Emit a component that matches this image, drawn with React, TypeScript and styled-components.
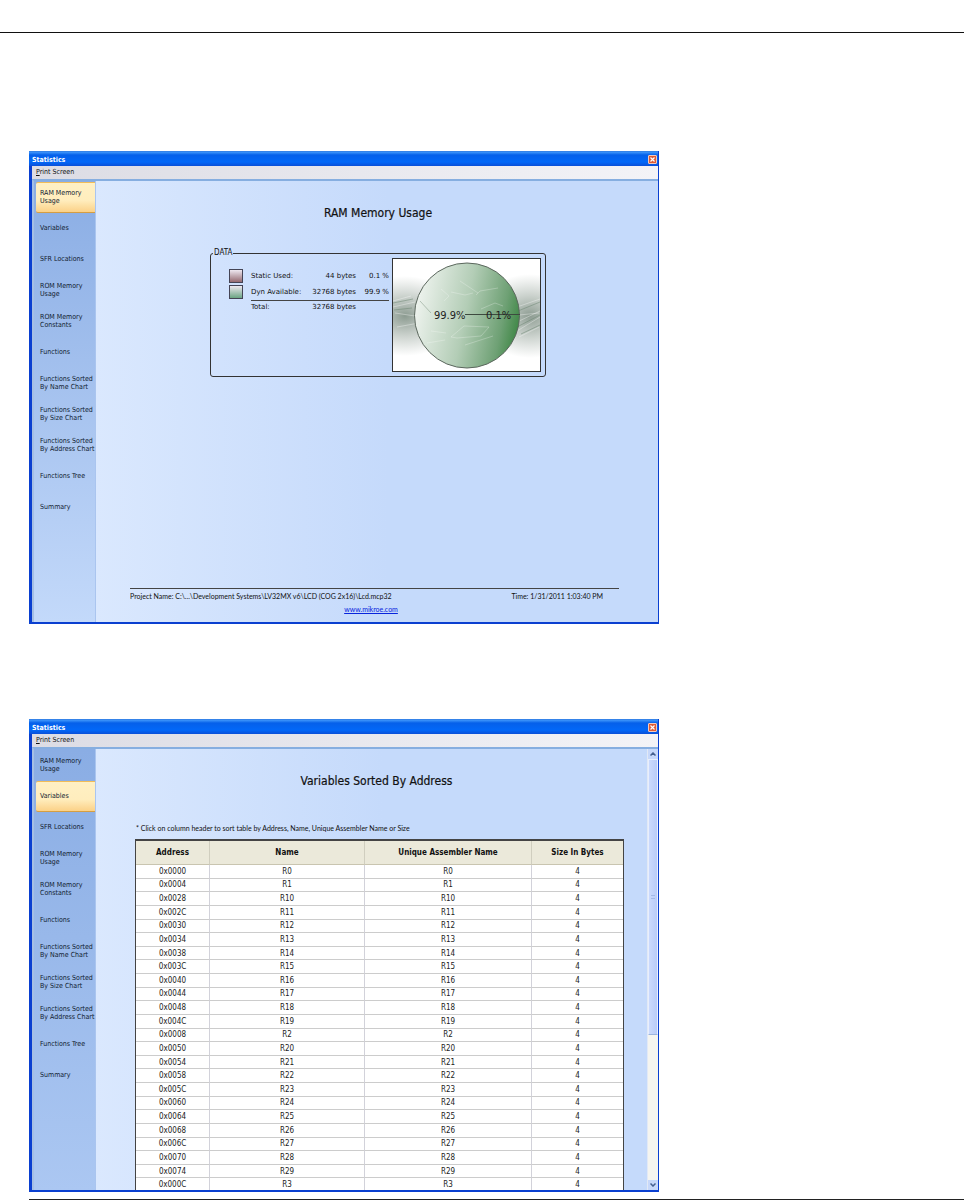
import React from "react";
import styled, { createGlobalStyle } from "styled-components";

const GlobalStyle = createGlobalStyle`
  *, *::before, *::after { box-sizing: border-box; }
  body {
    margin: 0;
    background: #fff;
    color: #111;
    font: 7px/8px "DejaVu Sans Condensed", "DejaVu Sans", sans-serif;
  }
  button { font: inherit; color: inherit; border: 0; padding: 0; background: none; }
  h1, h2, p { margin: 0; }
`;

const narrow = `"Lato", "Liberation Sans", sans-serif`;

const Page = styled.main`
  padding-right: 2px;
`;

const TopRule = styled.header`
  height: 33px;
  margin-bottom: 118px;
  border-bottom: 1px solid #111;
`;

const Figures = styled.div`
  display: flex;
  flex-direction: column;
  gap: 95px;
  margin-left: 29px;
  padding-bottom: 7px;
  border-bottom: 1px solid #222;
`;

const Window = styled.section`
  display: flex;
  flex-direction: column;
  width: 100%;
  max-width: 630px;
  border: solid #0a3fd0;
  border-width: 0 1px 2px 3px;
`;

const TitleBar = styled.header`
  display: flex;
  align-items: center;
  justify-content: space-between;
  height: 15px;
  margin-left: -3px;
  padding: 2px 1px 0 3px;
  background: linear-gradient(#2b6fd6 0, #3f97fb 1px, #0560ea 4px, #0268f8 11px, #0a4fd8 15px);
  color: #fff;
`;

const WindowName = styled.h1`
  font-size: 7px;
  line-height: 8px;
  font-weight: bold;
`;

const CloseButton = styled.button`
  display: grid;
  place-items: center;
  width: 9px;
  height: 9px;
  border: 1px solid #f4c8bc;
  border-radius: 1px;
  background: #dd5b35;
`;

const MenuBar = styled.div`
  display: flex;
  align-items: flex-start;
  height: 13px;
  padding: 2px 0 0 4px;
  background: linear-gradient(90deg, #dcdce4, #f3f3f7);
`;

const Body = styled.div`
  display: flex;
  height: 443px;
  border-top: 2px solid #86aee0;
  border-left: 2px solid #a5bfe4;
`;

const Sidebar = styled.nav<{ $end: string }>`
  flex: none;
  width: 62px;
  padding: 1px 0 0 2px;
  border-right: 1px solid #aac5ef;
  background: linear-gradient(#8aade4, ${(p) => p.$end});
`;

const NavList = styled.div`
  display: grid;
  grid-auto-rows: 1fr;
  height: 340px;
`;

const NavItem = styled.button<{ $active?: boolean }>`
  padding: 0 0 0 4px;
  text-align: left;
  white-space: pre-line;
  color: #111c30;
  ${(p) =>
    p.$active &&
    `
    border-radius: 2px 0 0 2px;
    border-top: 1px solid #f2bd58;
    border-bottom: 1px solid #d59e43;
    background: linear-gradient(#fff0c4, #ffedbd 60%, #fbd187);
  `}
`;

const Content = styled.div`
  flex: 1;
  min-width: 0;
  display: flex;
  flex-direction: column;
  overflow: hidden;
  background: linear-gradient(90deg, #dae8fe, #c5dafb 52%);
`;

const Heading = styled.h2<{ $shift?: boolean }>`
  padding: 24px 0 0;
  padding-left: ${(p) => (p.$shift ? "10px" : "2px")};
  text-align: center;
  font-size: 12px;
  line-height: 16px;
  font-weight: normal;
  -webkit-text-stroke: 0.2px #111;
`;

const DataGroup = styled.fieldset`
  display: flex;
  align-items: flex-start;
  justify-content: space-between;
  width: 336px;
  min-width: 0;
  margin: 28px 0 0 114px;
  padding: 1px 4px 4px 18px;
  border: 1px solid #333;
  border-radius: 3px;

  legend {
    margin-left: -16px;
    padding: 0 1px;
    font-size: 8px;
  }
`;

const Usage = styled.table`
  width: 160px;
  margin-top: 10px;
  border-collapse: collapse;
  table-layout: fixed;
  font-family: "DejaVu Sans", sans-serif;

  td, th { padding: 0; height: 16px; text-align: right; font-weight: normal; white-space: nowrap; }
  th { text-align: left; }
  td:first-child { text-align: left; }
  tfoot td, tfoot th { height: 14px; }
  tfoot th, tfoot th ~ td { border-top: 1px solid #444; }
`;

const Swatch = styled.span<{ $tone: string }>`
  display: block;
  width: 14px;
  height: 14px;
  border: 1px solid #445;
  background: linear-gradient(#eee8f0, ${(p) => p.$tone});
`;

const Chart = styled.svg`
  flex: none;
  width: 149px;
  height: 114px;
  background: #fff;
  border: 1px solid #333;
`;

const Footer = styled.footer`
  margin: auto 39px 9px 34px;
  border-top: 1px solid #444;
  font-family: ${narrow};
`;

const FooterRow = styled.div`
  display: flex;
  justify-content: space-between;
  padding: 3px 16px 5px 0;
`;

const SiteLink = styled.a`
  display: block;
  width: fit-content;
  margin: 0 auto;
  padding: 0 7px 0 0;
  color: #0824dd;
`;

const Note = styled.p`
  margin: 35px 0 7px 40px;
  font-family: ${narrow};
`;

const Variables = styled.table`
  flex: none;
  width: 489px;
  height: 352px;
  margin-left: 39px;
  border-collapse: separate;
  border-spacing: 0;
  table-layout: fixed;
  border: solid #444;
  border-width: 2px 1px 0;
  background: #fff;
  font-size: 8px;

  th { height: 24px; padding: 0; background: #ebe9da; border-bottom: 1px solid #c9c5b0; border-right: 1px solid #d0cebf; }
  td { padding: 1px 0 0; text-align: center; border-bottom: 1px solid #ccc; border-right: 1px solid #d2d2da; color: #222; }
  th:last-child, td:last-child { border-right: 0; }
  tbody tr:last-child td { border-bottom: 0; }
  th button { font-weight: bold; }
`;

const Scrollbar = styled.div`
  flex: none;
  display: flex;
  flex-direction: column;
  width: 11px;
  border-left: 1px solid #e2e9f6;
  background: #f5f5f0;
`;

const ScrollButton = styled.button`
  display: grid;
  place-items: center;
  height: 10px;
  background: #c7d8fa;
`;

const Thumb = styled.div`
  display: grid;
  place-items: center;
  height: 276px;
  margin-bottom: auto;
  border: 1px solid #e8effd;
  border-bottom-color: #9cb4de;
  border-radius: 1px;
  background: linear-gradient(90deg, #cbdafd, #b9ccf8);
`;

const Grip = styled.span`
  width: 4px;
  height: 4px;
  border: solid #a3b9e6;
  border-width: 1px 0;
`;

const pages = [
  "RAM Memory\nUsage",
  "Variables",
  "SFR Locations",
  "ROM Memory\nUsage",
  "ROM Memory\nConstants",
  "Functions",
  "Functions Sorted\nBy Name Chart",
  "Functions Sorted\nBy Size Chart",
  "Functions Sorted\nBy Address Chart",
  "Functions Tree",
  "Summary",
];

const variables: [string, string][] = [
  ["0x0000", "R0"], ["0x0004", "R1"], ["0x0028", "R10"], ["0x002C", "R11"],
  ["0x0030", "R12"], ["0x0034", "R13"], ["0x0038", "R14"], ["0x003C", "R15"],
  ["0x0040", "R16"], ["0x0044", "R17"], ["0x0048", "R18"], ["0x004C", "R19"],
  ["0x0008", "R2"], ["0x0050", "R20"], ["0x0054", "R21"], ["0x0058", "R22"],
  ["0x005C", "R23"], ["0x0060", "R24"], ["0x0064", "R25"], ["0x0068", "R26"],
  ["0x006C", "R27"], ["0x0070", "R28"], ["0x0074", "R29"], ["0x000C", "R3"],
];

function StatisticsWindow({ active, sidebarEnd, children }: { active: number; sidebarEnd: string; children: React.ReactNode }) {
  return (
    <Window aria-label="Statistics">
      <TitleBar>
        <WindowName>Statistics</WindowName>
        <CloseButton type="button" aria-label="Close">
          <svg width="5" height="5" viewBox="0 0 5 5" stroke="#fff" strokeWidth="1.2">
            <path d="M.5 .5l4 4M4.5 .5l-4 4" />
          </svg>
        </CloseButton>
      </TitleBar>
      <MenuBar>
        <button type="button"><u>P</u>rint Screen</button>
      </MenuBar>
      <Body>
        <Sidebar $end={sidebarEnd} aria-label="Statistics pages">
          <NavList>
            {pages.map((page, i) => (
              <NavItem key={page} type="button" $active={i === active}>{page}</NavItem>
            ))}
          </NavList>
        </Sidebar>
        {children}
      </Body>
    </Window>
  );
}

function UsageChart() {
  return (
    <Chart viewBox="0 0 147 112" role="img" aria-label="RAM usage">
      <defs>
        <linearGradient id="pie" x1="0" y1="0.3" x2="1" y2="0.5">
          <stop offset="0" stopColor="#f1f5f1" />
          <stop offset="0.5" stopColor="#b3cdb6" />
          <stop offset="0.85" stopColor="#6fa175" />
          <stop offset="1" stopColor="#448a4b" />
        </linearGradient>
        <radialGradient id="shade" cx="0.5" cy="0.5" r="0.5">
          <stop offset="0" stopColor="#6f8275" stopOpacity="0.8" />
          <stop offset="0.5" stopColor="#7f9084" stopOpacity="0.4" />
          <stop offset="1" stopColor="#8a988e" stopOpacity="0" />
        </radialGradient>
      </defs>
      <ellipse cx="12" cy="57" rx="56" ry="40" fill="url(#shade)" />
      <ellipse cx="137" cy="57" rx="52" ry="42" fill="url(#shade)" />
      <g fill="none" stroke="#fff" strokeOpacity="0.35">
        <path d="M0 42l18-5M0 48l22-5M2 54l20 3M4 68l22-4M124 48l23-8M126 56l20-2M122 64l25-12M124 72l23-14M126 78l20-10" />
      </g>
      <g fill="none" stroke="#6c8571" strokeOpacity="0.5">
        <path d="M0 44l20-4M1 51l18-2M125 52l22-9M124 68l23-12M128 75l19-9" />
      </g>
      <circle cx="74" cy="56.5" r="52.5" fill="url(#pie)" stroke="#5b675d" />
      <g fill="none" stroke="#fff" strokeOpacity="0.25">
        <path d="M67 22l18 12M58 33l14 3 8-2M83 36l4-4 18-3M58 78l13-11 25 1-8 9-24 2zM38 72l15 2M34 84l18-3M72 86l28-9M88 50l14-6 8 3M48 30l8 7-5 5" />
      </g>
      <path d="M27 42L38 54" stroke="#7d9381" strokeOpacity="0.5" />
      <path d="M72 55.5h55" stroke="#3d4a3f" />
      <g fontSize="11" fill="#222">
        <text x="41" y="60">99.9%</text>
        <text x="93" y="60">0.1%</text>
      </g>
    </Chart>
  );
}

export default function App() {
  return (
    <>
      <GlobalStyle />
      <Page>
        <TopRule />
        <Figures>
          <StatisticsWindow active={0} sidebarEnd="#c3d9fa">
            <Content>
              <Heading>RAM Memory Usage</Heading>
              <DataGroup>
                <legend>DATA</legend>
                <Usage>
                  <colgroup>
                    <col style={{ width: 22 }} />
                    <col style={{ width: 51 }} />
                    <col style={{ width: 54 }} />
                    <col />
                  </colgroup>
                  <tbody>
                    <tr>
                      <td><Swatch $tone="#956a70" /></td>
                      <th scope="row">Static Used:</th>
                      <td>44 bytes</td>
                      <td>0.1 %</td>
                    </tr>
                    <tr>
                      <td><Swatch $tone="#6ba583" /></td>
                      <th scope="row">Dyn Available:</th>
                      <td>32768 bytes</td>
                      <td>99.9 %</td>
                    </tr>
                  </tbody>
                  <tfoot>
                    <tr>
                      <td />
                      <th scope="row">Total:</th>
                      <td>32768 bytes</td>
                      <td />
                    </tr>
                  </tfoot>
                </Usage>
                <UsageChart />
              </DataGroup>
              <Footer>
                <FooterRow>
                  <span>Project Name: C:\...\Development Systems\LV32MX v6\LCD (COG 2x16)\Lcd.mcp32</span>
                  <span>Time: 1/31/2011 1:03:40 PM</span>
                </FooterRow>
                <SiteLink href="#">www.mikroe.com</SiteLink>
              </Footer>
            </Content>
          </StatisticsWindow>

          <StatisticsWindow active={1} sidebarEnd="#abc7f2">
            <Content>
              <Heading $shift>Variables Sorted By Address</Heading>
              <Note>* Click on column header to sort table by Address, Name, Unique Assembler Name or Size</Note>
              <Variables>
                <colgroup>
                  <col style={{ width: 74 }} />
                  <col style={{ width: 155 }} />
                  <col style={{ width: 167 }} />
                  <col />
                </colgroup>
                <thead>
                  <tr>
                    {["Address", "Name", "Unique Assembler Name", "Size In Bytes"].map((label) => (
                      <th key={label} scope="col"><button type="button">{label}</button></th>
                    ))}
                  </tr>
                </thead>
                <tbody>
                  {variables.map(([address, name]) => (
                    <tr key={address}>
                      <td>{address}</td>
                      <td>{name}</td>
                      <td>{name}</td>
                      <td>4</td>
                    </tr>
                  ))}
                </tbody>
              </Variables>
            </Content>
            <Scrollbar>
              <ScrollButton type="button" aria-label="Scroll up">
                <svg width="6" height="4" viewBox="0 0 6 4" fill="none" stroke="#46608f" strokeWidth="1.5"><path d="M.5 3.5L3 1L5.5 3.5" /></svg>
              </ScrollButton>
              <Thumb><Grip /></Thumb>
              <ScrollButton type="button" aria-label="Scroll down">
                <svg width="6" height="4" viewBox="0 0 6 4" fill="none" stroke="#46608f" strokeWidth="1.5"><path d="M.5 .5L3 3L5.5 .5" /></svg>
              </ScrollButton>
            </Scrollbar>
          </StatisticsWindow>
        </Figures>
      </Page>
    </>
  );
}
